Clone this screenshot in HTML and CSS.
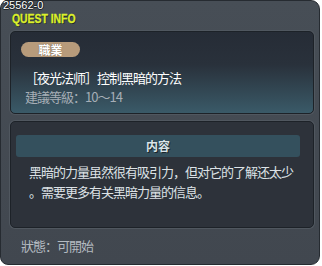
FILE: index.html
```html
<!DOCTYPE html>
<html lang="zh">

<head>
    <meta charset="UTF-8">
    <meta name="viewport" content="width=device-width, initial-scale=1.0">
    <title>Quest Info</title>
    <link rel="stylesheet" href="styles.css">
</head>

<body>
    <div class="window">
        <div class="serial">25562-0</div>
        <div class="caption">QUEST INFO</div>

        <div class="panel panel-top">
            <span class="badge">職業</span>
            <div class="quest-name">［夜光法师］控制黑暗的方法</div>
            <div class="quest-level">建議等級：10～14</div>
        </div>

        <div class="panel panel-body">
            <div class="bar">内容</div>
            <div class="desc">黑暗的力量虽然很有吸引力，但对它的了解还太少<br>。需要更多有关黑暗力量的信息。</div>
        </div>

        <div class="status">狀態：可開始</div>
    </div>
</body>

</html>
```

FILE: styles.css
```css
body {
    margin: 0;
    padding: 0;
    background-color: #ffffff;
    font-family: "Noto Sans CJK SC", "Liberation Sans", sans-serif;
}

.window {
    width: 320px;
    height: 265px;
    box-sizing: border-box;
    border: 1px solid #262b31;
    border-radius: 8px 9px 9px 8px;
    background: linear-gradient(to bottom, #474e56, #41474f);
    padding: 0 6px 0 9px;
}

.serial {
    font-family: "Liberation Sans", sans-serif;
    font-size: 11px;
    line-height: 11px;
    height: 11px;
    color: #ffffff;
    margin: -1px 0 0 -7px;
    text-shadow: 1px 0 0 #1b1f24, -1px 0 0 #1b1f24, 0 1px 0 #1b1f24, 0 -1px 0 #1b1f24;
}

.caption {
    font-family: "Liberation Sans", sans-serif;
    font-weight: bold;
    font-size: 13px;
    line-height: 13px;
    height: 13px;
    color: #dcf02a;
    margin: 1px 0 0 2px;
    transform: scaleX(0.8);
    transform-origin: left center;
    -webkit-text-stroke: 0.3px #dcf02a;
    text-shadow: 1px 1px 0 #1e2328;
}

.panel {
    width: 304px;
    box-sizing: border-box;
    border: 1px solid #1d2228;
    border-radius: 5px;
    box-shadow: 0 0 0 1px #50575f;
    margin-top: 6px;
}

.panel-top {
    height: 83px;
    padding: 10px 0 0 10px;
    background: linear-gradient(to bottom, #262c36 0%, #29313b 40%, #3a5a68 100%);
}

.badge {
    display: block;
    width: 59px;
    height: 15px;
    border-radius: 8px;
    background-color: #b79b7b;
    color: #ffffff;
    font-size: 12px;
    font-weight: bold;
    line-height: 15px;
    text-align: center;
    text-shadow: 0 0 1px #5a4532;
}

.quest-name {
    font-size: 13px;
    letter-spacing: -1px;
    line-height: 16px;
    color: #ffffff;
    margin: 13px 0 0 4px;
}

.quest-level {
    font-size: 13px;
    letter-spacing: -1px;
    line-height: 16px;
    color: #a6aeb6;
    margin: 3px 0 0 4px;
}

.panel-body {
    height: 107px;
    padding: 13px 0 0 5px;
    background-color: #2d323a;
}

.panel-body.panel {
    margin-top: 7px;
}

.bar {
    width: 284px;
    height: 22px;
    border-radius: 3px;
    background-color: #34505d;
    color: #d9e4e8;
    font-size: 12px;
    font-weight: bold;
    line-height: 22px;
    text-align: center;
    text-shadow: 1px 1px 0 #1a2329;
}

.desc {
    font-size: 13px;
    letter-spacing: -1px;
    line-height: 20px;
    color: #dde2e6;
    margin: 5px 0 0 13px;
    white-space: nowrap;
}

.status {
    font-size: 13px;
    letter-spacing: -1px;
    line-height: 16px;
    color: #b4bac0;
    margin: 10px 0 0 11px;
}
```
